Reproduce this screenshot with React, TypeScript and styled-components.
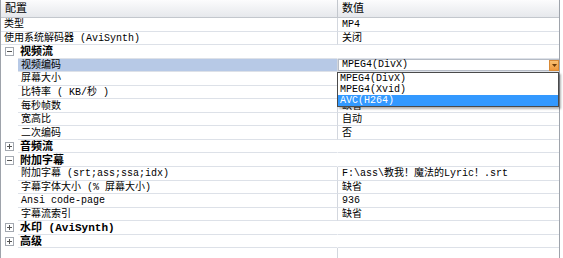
import React from "react";
import styled, { createGlobalStyle } from "styled-components";

const GlobalStyle = createGlobalStyle`
  html, body {
    margin: 0;
    padding: 0;
    background: #ffffff;
  }
  body {
    font-family: "Liberation Mono", "Noto Sans CJK SC", monospace;
    font-size: 10px;
    line-height: 12px;
    color: #000;
  }
  * {
    box-sizing: border-box;
  }
`;

type Row =
  | { kind: "item"; label: string; value: string; level: 0 | 1; selected?: boolean }
  | { kind: "section"; label: string; open: boolean };

const rows: Row[] = [
  { kind: "item", label: "类型", value: "MP4", level: 0 },
  { kind: "item", label: "使用系统解码器 (AviSynth)", value: "关闭", level: 0 },
  { kind: "section", label: "视频流", open: true },
  { kind: "item", label: "视频编码", value: "MPEG4(DivX)", level: 1, selected: true },
  { kind: "item", label: "屏幕大小", value: "", level: 1 },
  { kind: "item", label: "比特率 ( KB/秒 )", value: "", level: 1 },
  { kind: "item", label: "每秒帧数", value: "缺省", level: 1 },
  { kind: "item", label: "宽高比", value: "自动", level: 1 },
  { kind: "item", label: "二次编码", value: "否", level: 1 },
  { kind: "section", label: "音频流", open: false },
  { kind: "section", label: "附加字幕", open: true },
  { kind: "item", label: "附加字幕 (srt;ass;ssa;idx)", value: "F:\\ass\\教我！魔法的Lyric！.srt", level: 1 },
  { kind: "item", label: "字幕字体大小 (% 屏幕大小)", value: "缺省", level: 1 },
  { kind: "item", label: "Ansi code-page", value: "936", level: 1 },
  { kind: "item", label: "字幕流索引", value: "缺省", level: 1 },
  { kind: "section", label: "水印 (AviSynth)", open: false },
  { kind: "section", label: "高级", open: false },
];

const codecs = ["MPEG4(DivX)", "MPEG4(Xvid)", "AVC(H264)"];

const Grid = styled.div`
  width: 560px;
  height: 258px;
  border-left: 1px solid #9ea3ab;
  border-right: 1px solid #9ea3ab;
  display: flex;
  flex-direction: column;
`;

const Header = styled.div`
  display: grid;
  grid-template-columns: 336px 1fr;
  height: 18px;
  flex: none;
  background: linear-gradient(#fcfcfd, #e6e8ec);
  border-bottom: 1px solid #c3c7cd;
  font-size: 11px;
`;

const HeadCell = styled.div<{ $divider?: boolean }>`
  display: flex;
  align-items: center;
  padding: 1px 0 0 4px;
  border-left: ${(p) => (p.$divider ? "1px solid #c3c7cd" : "none")};
`;

const RowLine = styled.div`
  display: grid;
  grid-template-columns: 336px 1fr;
  grid-template-rows: 13.55px;
  height: 13.55px;
  flex: none;
`;

const LabelCell = styled.div`
  display: flex;
  min-width: 0;
  overflow: hidden;
`;

const Gutter = styled.div<{ $width: number }>`
  width: ${(p) => p.$width}px;
  flex: none;
  display: flex;
  align-items: center;
  justify-content: center;
`;

const LabelText = styled.div<{ $selected?: boolean; $bold?: boolean; $pad: number }>`
  flex: 1;
  display: flex;
  align-items: center;
  padding: 2px 0 0 ${(p) => p.$pad}px;
  white-space: nowrap;
  overflow: hidden;
  border-bottom: 1px solid #dde1e8;
  background: ${(p) => (p.$selected ? "#b7c9e6" : "transparent")};
  font-weight: ${(p) => (p.$bold ? 700 : 400)};
  font-size: ${(p) => (p.$bold ? 11 : 10)}px;
`;

const ValueCell = styled.div<{ $divider: boolean }>`
  position: relative;
  display: flex;
  align-items: center;
  padding: 2px 0 0 4px;
  white-space: nowrap;
  border-left: ${(p) => (p.$divider ? "1px solid #d3d7de" : "1px solid transparent")};
  border-bottom: 1px solid #dde1e8;
`;

const Editor = styled.div`
  position: absolute;
  inset: 0 0 0 0;
  display: flex;
  align-items: center;
  padding: 1px 0 0 3px;
  background: #ffffff;
  border: 1px solid #b6bcc6;
  border-right: none;
`;

const DropButton = styled.div`
  position: absolute;
  right: 0;
  top: 1px;
  width: 10px;
  height: 11px;
  background: linear-gradient(#f8c072, #f0993c);
  border: 1px solid #d98a36;
  display: flex;
  align-items: center;
  justify-content: center;
`;

const List = styled.div`
  position: absolute;
  top: 13px;
  left: -1px;
  right: 0;
  background: #ffffff;
  border: 1px solid #4a4a4a;
  box-shadow: 2px 2px 2px rgba(0, 0, 0, 0.3);
  z-index: 2;
`;

const ListItem = styled.div<{ $active?: boolean }>`
  height: 11px;
  line-height: 12px;
  padding-left: 2px;
  background: ${(p) => (p.$active ? "#3399ff" : "transparent")};
  color: ${(p) => (p.$active ? "#ffffff" : "#000000")};
`;

const Filler = styled.div`
  flex: 1;
  display: grid;
  grid-template-columns: 336px 1fr;
`;

const FillerValue = styled.div`
  border-left: 1px solid #d3d7de;
`;

const Expander: React.FC<{ open: boolean }> = ({ open }) => (
  <svg width="9" height="9" viewBox="0 0 9 9">
    <rect x="0.5" y="0.5" width="8" height="8" fill="#fff" stroke="#a3a8b0" />
    <line x1="2" y1="4.5" x2="7" y2="4.5" stroke="#555" />
    {!open && <line x1="4.5" y1="2" x2="4.5" y2="7" stroke="#555" />}
  </svg>
);

const Arrow: React.FC = () => (
  <svg width="5" height="3" viewBox="0 0 5 3">
    <path d="M0 0 L5 0 L2.5 3 Z" fill="#6b3b0a" />
  </svg>
);

const App: React.FC = () => (
  <>
    <GlobalStyle />
    <Grid>
      <Header>
        <HeadCell>配置</HeadCell>
        <HeadCell $divider>数值</HeadCell>
      </Header>
      {rows.map((row, i) =>
        row.kind === "section" ? (
          <RowLine key={i}>
            <LabelCell>
              <Gutter $width={17}>
                <Expander open={row.open} />
              </Gutter>
              <LabelText $bold $pad={2}>{row.label}</LabelText>
            </LabelCell>
            <ValueCell $divider={false} />
          </RowLine>
        ) : (
          <RowLine key={i}>
            <LabelCell>
              {row.level === 1 && <Gutter $width={17} />}
              <LabelText $selected={row.selected} $pad={3}>
                {row.label}
              </LabelText>
            </LabelCell>
            <ValueCell $divider>
              {row.value}
              {row.selected && (
                <>
                  <Editor>{row.value}</Editor>
                  <DropButton>
                    <Arrow />
                  </DropButton>
                  <List>
                    {codecs.map((c, j) => (
                      <ListItem key={c} $active={j === 2}>
                        {c}
                      </ListItem>
                    ))}
                  </List>
                </>
              )}
            </ValueCell>
          </RowLine>
        )
      )}
      <Filler>
        <div />
        <FillerValue />
      </Filler>
    </Grid>
  </>
);

export default App;
